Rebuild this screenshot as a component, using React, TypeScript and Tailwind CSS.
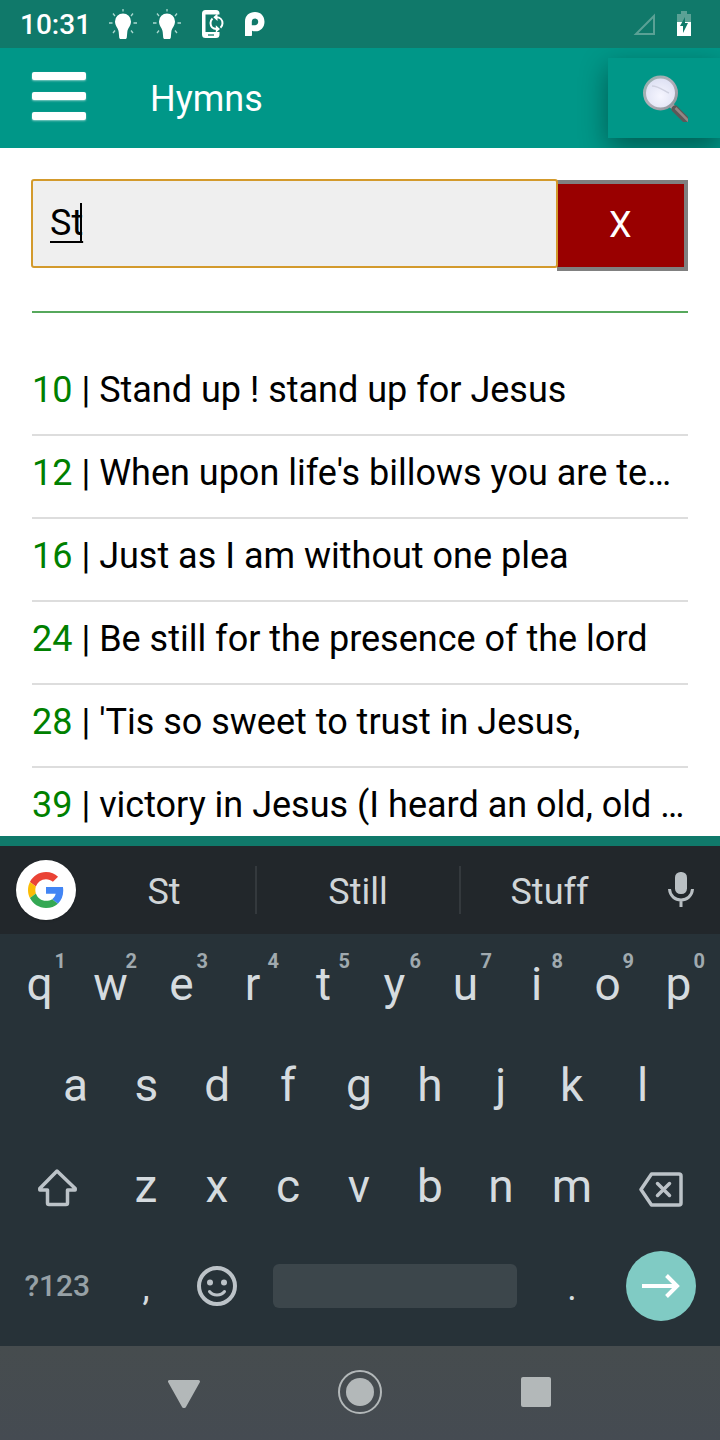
import React, { useState } from 'react';

const hymns = [
  { number: 10, title: 'Stand up ! stand up for Jesus' },
  { number: 12, title: "When upon life's billows you are te…" },
  { number: 16, title: 'Just as I am without one plea' },
  { number: 24, title: 'Be still for the presence of the lord' },
  { number: 28, title: "'Tis so sweet to trust in Jesus," },
  { number: 39, title: 'victory in Jesus (I heard an old, old …' },
];

const topKeys = ['q', 'w', 'e', 'r', 't', 'y', 'u', 'i', 'o', 'p'];
const middleKeys = ['a', 's', 'd', 'f', 'g', 'h', 'j', 'k', 'l'];
const bottomKeys = ['z', 'x', 'c', 'v', 'b', 'n', 'm'];

const BulbIcon: React.FC = () => (
  <svg className="w-8 h-8" viewBox="0 0 32 32" fill="none">
    <path
      d="M16 5.500a8 8 0 0 1 8 8c0 4.500-3.300 6.500-3.700 10.500l-.5 5.500c-.1.900-.6 1.500-1.500 1.500h-4.600c-.9 0-1.400-.6-1.500-1.500l-.5-5.500C11.300 20 8 18 8 13.500a8 8 0 0 1 8-8z"
      fill="#fff"
    />
    <path
      d="M16 1v2.500M2 15h3.500M26.500 15H30M6 5.500l2 2.500M26 5.500L24 8M6 25l2-2.500M26 25l-2-2.500"
      stroke="#a9d8cf"
      strokeWidth="1.300"
    />
  </svg>
);

const PhoneSyncIcon: React.FC = () => (
  <svg className="w-6 h-8" viewBox="0 0 24 32" fill="none">
    <path
      d="M18.500 6.500V5.500A3.500 3.500 0 0 0 15 2H4.500A3.500 3.500 0 0 0 1 5.500v21A3.500 3.500 0 0 0 4.500 30H15a3.500 3.500 0 0 0 3.500-3.500v-2.500H4.500V6.500z"
      fill="#fff"
    />
    <path d="M7 27h6" stroke="#10796a" strokeWidth="1.300" />
    <path
      d="M15.500 9.300c3.800 0 6 2.800 6 5.900 0 1.900-.7 3.300-2 4.500M15.500 21c-3.800 0-6-2.800-6-5.900 0-1.900.7-3.300 2-4.500"
      stroke="#fff"
      strokeWidth="2"
    />
    <path d="M16.500 5.500v7.500L12.300 9.300zM14.800 17.300v7.500l4.200-3.700z" fill="#fff" />
  </svg>
);

const PIcon: React.FC = () => (
  <svg className="w-5 h-6" viewBox="0 0 20 24">
    <path
      d="M0 24V9.500C0 3.800 4.200 0 10 0s9.500 4 9.500 9.700-3.900 9.600-9 9.600c-1.500 0-2.700-.2-3.500-.6V23c0 .6-.4 1-1 1zM10.300 6.400A3.500 3.500 0 0 0 6.800 10v3.300h3.500a3.500 3.500 0 0 0 0-6.900z"
      fill="#fff"
      fillRule="evenodd"
    />
  </svg>
);

const SearchIcon: React.FC = () => (
  <svg className="w-12 h-12" viewBox="0 0 48 48">
    <defs>
      <radialGradient id="lens" cx="0.5" cy="0.6" r="0.6">
        <stop offset="0" stopColor="#f6f6ff" />
        <stop offset="1" stopColor="#dcdff2" />
      </radialGradient>
      <linearGradient id="rim" x1="0" y1="0" x2="1" y2="1">
        <stop offset="0" stopColor="#8fb0ab" />
        <stop offset="0.5" stopColor="#b3aeb9" />
        <stop offset="1" stopColor="#8b9298" />
      </linearGradient>
    </defs>
    <path d="M31 31l5 5" stroke="#a9a9ad" strokeWidth="5" />
    <path d="M35 35l14 14" stroke="#5d5858" strokeWidth="7" strokeLinecap="round" />
    <path d="M35.500 34l13 13" stroke="#918785" strokeWidth="2.500" />
    <circle cx="20.500" cy="19" r="16" fill="url(#lens)" stroke="url(#rim)" strokeWidth="3" />
    <path d="M12 12c6 0 11 4 17 7" stroke="#cfd1e0" strokeWidth="1.500" fill="none" />
  </svg>
);

const GoogleIcon: React.FC = () => (
  <svg className="w-9 h-9" viewBox="0 0 48 48">
    <path fill="#EA4335" d="M24 9.500c3.540 0 6.710 1.220 9.210 3.600l6.850-6.850C35.900 2.380 30.470 0 24 0 14.620 0 6.510 5.380 2.560 13.220l7.980 6.190C12.430 13.720 17.740 9.500 24 9.500z" />
    <path fill="#4285F4" d="M46.980 24.550c0-1.570-.15-3.090-.38-4.550H24v9.020h12.940c-.58 2.960-2.260 5.480-4.780 7.180l7.730 6c4.510-4.180 7.090-10.360 7.090-17.650z" />
    <path fill="#FBBC05" d="M10.530 28.590c-.48-1.450-.76-2.990-.76-4.590s.27-3.140.76-4.590l-7.980-6.190C.92 16.460 0 20.120 0 24c0 3.880.92 7.540 2.560 10.780l7.970-6.190z" />
    <path fill="#34A853" d="M24 48c6.480 0 11.930-2.130 15.890-5.810l-7.730-6c-2.150 1.450-4.920 2.300-8.160 2.300-6.260 0-11.570-4.220-13.470-9.910l-7.980 6.190C6.510 42.620 14.620 48 24 48z" />
  </svg>
);

const StatusBar: React.FC = () => (
  <div className="flex items-center h-12 shrink-0 pl-5 pr-7 bg-[#10796a]">
    <span className="pt-0.5 text-[28px] leading-8 font-medium text-white">10:31</span>
    <div className="flex items-center pl-4 gap-3">
      <BulbIcon />
      <BulbIcon />
      <div className="flex items-center pl-1.5 gap-5">
        <PhoneSyncIcon />
        <PIcon />
      </div>
    </div>
    <div className="flex items-center gap-5 ml-auto">
      <svg className="w-6 h-6" viewBox="0 0 24 24" fill="none">
        <path d="M22 4v18H4z" stroke="#5aa195" strokeWidth="2" />
      </svg>
      <svg className="w-4 h-7" viewBox="0 0 16 28">
        <path d="M5 1h6v3h4v8H1V4h4z" fill="#5aa195" />
        <path d="M1 12h14v14H1z" fill="#fff" />
        <path d="M9 7v6h3L7 23v-7H4z" fill="#10796a" />
      </svg>
    </div>
  </div>
);

const Header: React.FC = () => (
  <header className="flex items-center h-[100px] shrink-0 pl-8 bg-[#009788] overflow-hidden">
    <button aria-label="Menu" className="flex flex-col gap-3 w-[54px] pb-1">
      <span className="h-2 w-full rounded-xs bg-white shadow-[0_1px_2px_rgba(255,255,255,0.5)]"></span>
      <span className="h-2 w-full rounded-xs bg-white shadow-[0_1px_2px_rgba(255,255,255,0.5)]"></span>
      <span className="h-2 w-full rounded-xs bg-white shadow-[0_1px_2px_rgba(255,255,255,0.5)]"></span>
    </button>
    <h1 className="pl-16 pt-0.5 text-4xl text-white">Hymns</h1>
    <button
      aria-label="Search"
      className="flex items-center justify-center w-28 h-20 ml-auto bg-[#009788] shadow-[0_10px_28px_rgba(0,0,0,0.4)]"
    >
      <SearchIcon />
    </button>
  </header>
);

const Key: React.FC<{ label: string; hint?: string }> = ({ label, hint }) => (
  <button className="relative flex-2 h-full pb-0.5 text-center text-[#d5dbdf]">
    {label}
    {hint && (
      <span className="absolute top-4 right-[9px] text-xl leading-[22px] font-bold text-[#a0aaaf]">{hint}</span>
    )}
  </button>
);

const PunctuationKey: React.FC<{ label: string }> = ({ label }) => (
  <button className="flex-2 h-full pt-1 text-4xl text-center text-[#d5dbdf]">{label}</button>
);

const Keyboard: React.FC = () => (
  <div className="shrink-0 bg-[#273238]">
    <div className="grid grid-cols-[73px_184fr_204fr_177fr_82px] items-center h-[88px] bg-[#22272b] text-4xl text-[#d0d5d8]">
      <button aria-label="Google" className="flex items-center justify-center w-15 h-15 ml-4 rounded-full bg-white shadow">
        <GoogleIcon />
      </button>
      <button className="h-12 pt-1 border-r-2 border-[#34393d]">St</button>
      <button className="h-12 pt-1 border-r-2 border-[#34393d]">Still</button>
      <button className="h-12 pt-1">Stuff</button>
      <button aria-label="Voice input" className="flex justify-center pl-1">
        <svg className="w-7 h-9" viewBox="0 0 28 36" fill="none">
          <rect x="8" y="0" width="12" height="22" rx="5.500" fill="#b9bfc3" />
          <path d="M2.500 17C3 24 8 28 14 28s11-4 11.500-11M14 28v7" stroke="#b9bfc3" strokeWidth="3" />
        </svg>
      </button>
    </div>

    <div className="pb-2 text-[46px] leading-none">
      <div className="flex h-[101px] pl-1 pr-1.5">
        {topKeys.map((key, index) => (
          <Key key={key} label={key} hint={String((index + 1) % 10)} />
        ))}
      </div>
      <div className="flex h-[101px] pl-10 pr-10.5">
        {middleKeys.map((key) => (
          <Key key={key} label={key} />
        ))}
      </div>
      <div className="flex h-[101px] pl-1 pr-1.5">
        <button aria-label="Shift" className="flex flex-3 items-center justify-center pt-0.5">
          <svg className="w-10 h-10" viewBox="0 0 40 40" fill="none">
            <path
              d="M20 3L2.800 20.500V22H10.500v13a1.500 1.500 0 0 0 1.500 1.500h17a1.500 1.500 0 0 0 1.500-1.500V22h7.700v-1.500z"
              stroke="#bcc3c8"
              strokeWidth="3.500"
              strokeLinejoin="round"
            />
          </svg>
        </button>
        {bottomKeys.map((key) => (
          <Key key={key} label={key} />
        ))}
        <button aria-label="Backspace" className="flex flex-3 items-center justify-center pt-1">
          <svg className="w-11 h-9" viewBox="0 0 44 36" fill="none">
            <path
              d="M12.500 3H40a2 2 0 0 1 2 2v27a2 2 0 0 1-2 2H12.500L2 18.500z"
              stroke="#bcc3c8"
              strokeWidth="3.500"
              strokeLinejoin="round"
            />
            <path d="M18.500 12.500l12 12M30.500 12.500l-12 12" stroke="#bcc3c8" strokeWidth="3.500" strokeLinecap="round" />
          </svg>
        </button>
      </div>
      <div className="flex items-center h-[101px] pl-1 pr-1.5 pb-1">
        <button className="flex-3 text-3xl font-medium text-[#97a1a6]">?123</button>
        <PunctuationKey label="," />
        <button aria-label="Emoji" className="flex flex-2 justify-center">
          <svg className="w-10 h-10" viewBox="0 0 40 40" fill="none">
            <circle cx="20" cy="20" r="18" stroke="#bcc3c8" strokeWidth="4" />
            <circle cx="13" cy="16.500" r="3" fill="#bcc3c8" />
            <circle cx="27" cy="16.500" r="3" fill="#bcc3c8" />
            <path d="M12.500 25.500c3.500 4.700 11.500 4.700 15 0" stroke="#bcc3c8" strokeWidth="3" strokeLinecap="round" />
          </svg>
        </button>
        <div className="flex-8">
          <div className="flex px-5">
            <button aria-label="Space" className="w-full h-11 rounded-md bg-[#3c464b]"></button>
          </div>
        </div>
        <PunctuationKey label="." />
        <div className="flex flex-3 justify-center">
          <button aria-label="Enter" className="flex items-center justify-center w-[70px] h-[70px] rounded-full bg-[#80cbc4]">
            <svg className="w-10 h-6" viewBox="0 0 40 24" fill="none">
              <path d="M1 12h36M25.500 1.500L36 12 25.500 22.500" stroke="#fff" strokeWidth="4" />
            </svg>
          </button>
        </div>
      </div>
    </div>
  </div>
);

const NavigationBar: React.FC = () => (
  <nav className="flex items-center justify-center h-[94px] shrink-0 pb-0.5 bg-linear-to-b from-[#464c4e] to-[#454b52]">
    <button aria-label="Back" className="flex justify-center w-44">
      <svg className="w-8 h-8" viewBox="0 0 32 32">
        <path d="M1.500 5.500h29L16.500 30.500h-1z" fill="#b3b8b9" stroke="#b3b8b9" strokeWidth="3" strokeLinejoin="round" />
      </svg>
    </button>
    <button aria-label="Home" className="flex justify-center w-44">
      <svg className="w-11 h-11" viewBox="0 0 44 44" fill="none">
        <circle cx="22" cy="22" r="21" stroke="#b3b8b9" strokeWidth="2" />
        <circle cx="22" cy="22" r="14" fill="#b3b8b9" />
      </svg>
    </button>
    <button aria-label="Recent apps" className="flex justify-center w-44">
      <span className="w-[30px] h-[30px] rounded-xs bg-[#b3b8b9]"></span>
    </button>
  </nav>
);

const App: React.FC = () => {
  const [query, setQuery] = useState('St');

  return (
    <div className="flex flex-col h-screen overflow-hidden bg-white font-[Roboto,sans-serif]">
      <StatusBar />
      <Header />

      <main className="flex-1 min-h-0 overflow-hidden px-8 pt-8 text-black">
        <div className="flex items-start">
          <div className="relative w-4/5">
            <input
              type="text"
              aria-label="Search hymns"
              value={query}
              onChange={(e) => setQuery(e.target.value)}
              className="block w-full h-[87px] px-[18px] pb-0.5 rounded-xs bg-[#efefef] text-4xl underline decoration-2 underline-offset-6 outline-2 -outline-offset-1 outline-[#d39a2c]"
            />
            {query === 'St' && <span className="absolute left-12 top-[23px] w-0.5 h-10 bg-black"></span>}
          </div>
          <button
            onClick={() => setQuery('')}
            className="w-1/5 h-[91px] pb-0.5 border-4 border-l-0 border-[#808080] bg-[#990000] text-4xl text-white"
          >
            X
          </button>
        </div>

        <hr className="mt-10 mb-10 border-t-2 border-[#56a85c]" />

        <ul>
          {hymns.map((hymn) => (
            <li key={hymn.number} className="border-b-2 border-[#dddddd]">
              <a href={`#hymn-${hymn.number}`} className="block pt-4 pb-5.5 text-4xl leading-[43px] truncate">
                <span className="text-[#008000]">{hymn.number}</span> | {hymn.title}
              </a>
            </li>
          ))}
        </ul>
      </main>

      <div className="h-2.5 shrink-0 bg-[#10796a]"></div>
      <Keyboard />
      <NavigationBar />
    </div>
  );
};

export default App;
